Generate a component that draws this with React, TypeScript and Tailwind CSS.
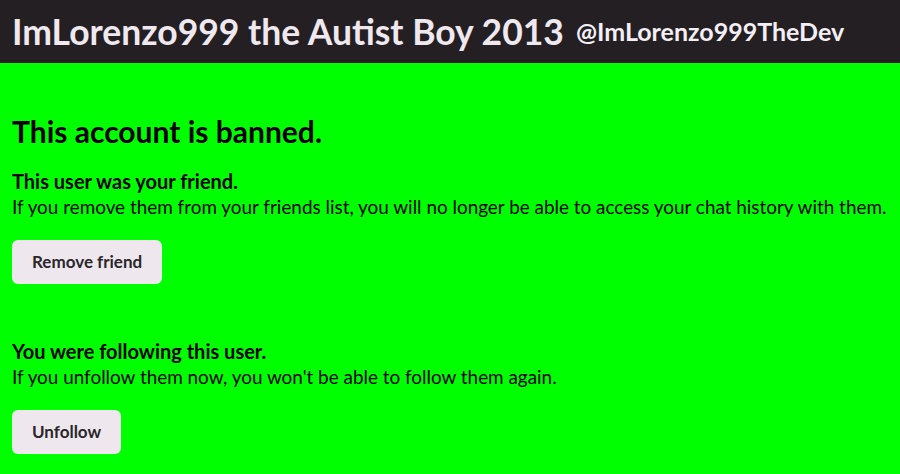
export default function App() {
  return (
    <div className="min-h-[474px] bg-[#00ff00] font-['Lato',sans-serif] text-black">
      <header className="flex h-[63px] items-center gap-3 bg-[#231f23] px-3">
        <h1 className="text-[35.5px] font-bold text-[#efe9ef]">ImLorenzo999 the Autist Boy 2013</h1>
        <span className="text-[25px] font-bold text-[#f4eff4]">@ImLorenzo999TheDev</span>
      </header>
      <main className="px-3 pt-[50px]">
        <h2 className="text-[30px] font-bold leading-[36px]">This account is banned.</h2>
        <section className="mt-[20px]">
          <p className="text-[20px] font-bold leading-[25px]">This user was your friend.</p>
          <p className="whitespace-nowrap text-[18.9px] leading-[25px]">
            If you remove them from your friends list, you will no longer be able to access your chat history with them.
          </p>
          <button className="mt-[21px] h-[44px] rounded-md bg-[#eee8ee] px-5 text-[17px] font-bold text-[#2a262a]">
            Remove friend
          </button>
        </section>
        <section className="mt-[55px]">
          <p className="text-[20px] font-bold leading-[25px]">You were following this user.</p>
          <p className="whitespace-nowrap text-[18.9px] leading-[25px]">
            If you unfollow them now, you won't be able to follow them again.
          </p>
          <button className="mt-[21px] h-[44px] rounded-md bg-[#eee8ee] px-5 text-[17px] font-bold text-[#2a262a]">
            Unfollow
          </button>
        </section>
      </main>
    </div>
  );
}
